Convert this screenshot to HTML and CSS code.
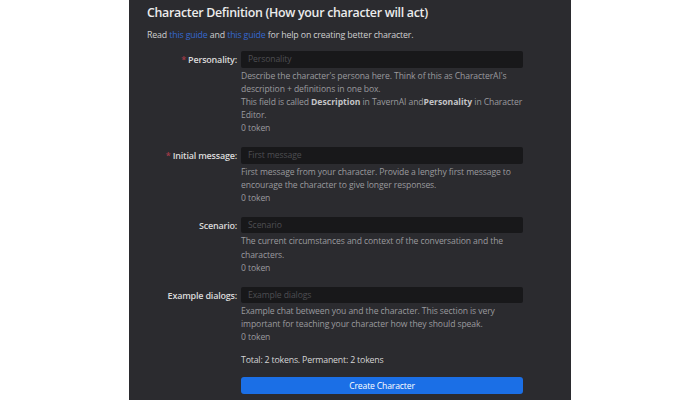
FILE: index.html
```html
<!DOCTYPE html>
<html>
<head>
<meta charset="utf-8">
<link rel="stylesheet" href="styles.css">
</head>
<body>
<div class="panel">
  <h2 class="title">Character Definition (How your character will act)</h2>
  <p class="intro">Read <a class="link">this guide</a> and <a class="link">this guide</a> for help on creating better character.</p>

  <div class="form">
    <div class="row">
      <label class="label"><span class="req">*</span> Personality:</label>
      <div class="field">
        <div class="input">Personality</div>
        <div class="help">Describe the character's persona here. Think of this as CharacterAI's description + definitions in one box.<br>This field is called <strong class="em">Description</strong> in TavernAI and<strong class="em">Personality</strong> in Character Editor.<br>0 token</div>
      </div>
    </div>

    <div class="row">
      <label class="label"><span class="req">*</span> Initial message:</label>
      <div class="field">
        <div class="input">First message</div>
        <div class="help">First message from your character. Provide a lengthy first message to encourage the character to give longer responses.<br>0 token</div>
      </div>
    </div>

    <div class="row">
      <label class="label">Scenario:</label>
      <div class="field">
        <div class="input">Scenario</div>
        <div class="help">The current circumstances and context of the conversation and the characters.<br>0 token</div>
      </div>
    </div>

    <div class="row">
      <label class="label">Example dialogs:</label>
      <div class="field">
        <div class="input">Example dialogs</div>
        <div class="help">Example chat between you and the character. This section is very important for teaching your character how they should speak.<br>0 token</div>
      </div>
    </div>

    <div class="row">
      <div></div>
      <div class="field">
        <div class="total">Total: 2 tokens. Permanent: 2 tokens</div>
        <button class="btn">Create Character</button>
      </div>
    </div>
  </div>
</div>
</body>
</html>
```

FILE: styles.css
```css
html, body {
  margin: 0;
  padding: 0;
  background: #ffffff;
  height: 400px;
  overflow: hidden;
}
body {
  font-family: "Open Sans", "Noto Sans", sans-serif;
}
.panel {
  margin-left: 129px;
  width: 442px;
  height: 400px;
  box-sizing: border-box;
  background: #2b2b2f;
  padding: 3px 18px 0 18px;
  color: #d6d6d6;
}
.title {
  margin: 0;
  font-size: 12.4px;
  letter-spacing: -0.3px;
  line-height: 20px;
  font-weight: 600;
  color: #ececec;
}
.intro {
  margin: 5px 0 0 0;
  font-size: 8.8px;
  letter-spacing: -0.15px;
  line-height: 14px;
  color: #cfcfcf;
}
.link {
  color: #3468d0;
}
.form {
  margin-top: 9px;
}
.row {
  display: grid;
  grid-template-columns: 90px 282px;
  column-gap: 4px;
  margin-bottom: 11.6px;
}
.label {
  text-align: right;
  font-size: 9px;
  letter-spacing: -0.2px;
  line-height: 17px;
  font-weight: 600;
  color: #dadada;
  white-space: nowrap;
}
.req {
  color: #a23a48;
}
.input {
  height: 16.5px;
  box-sizing: border-box;
  background: #18181a;
  border-radius: 2px;
  padding: 0 7px;
  font-size: 8.6px;
  letter-spacing: -0.1px;
  line-height: 16.5px;
  color: #4e4e52;
}
.help {
  margin-top: 2px;
  font-size: 8.6px;
  letter-spacing: -0.1px;
  line-height: 13.2px;
  color: #9a9a9e;
}
.em {
  color: #c4c4c7;
  font-weight: 700;
  letter-spacing: 0;
}
.total {
  margin-top: -3px;
  font-size: 8.8px;
  letter-spacing: -0.2px;
  line-height: 14px;
  color: #d4d4d4;
}
.btn {
  display: block;
  margin-top: 10px;
  width: 282px;
  height: 17px;
  border: none;
  border-radius: 3px;
  background: #1b6fe6;
  color: #ffffff;
  font-family: "Open Sans", "Noto Sans", sans-serif;
  font-size: 8.6px;
  letter-spacing: -0.15px;
  padding: 0;
}
```
